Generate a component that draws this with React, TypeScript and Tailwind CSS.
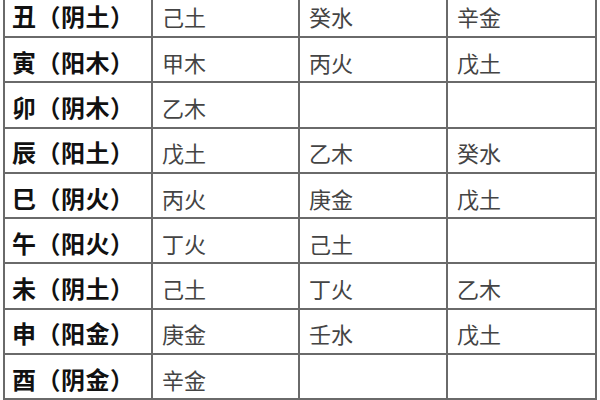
const rows: [string, string, string, string][] = [
  ["丑（阴土）", "己土", "癸水", "辛金"],
  ["寅（阳木）", "甲木", "丙火", "戊土"],
  ["卯（阴木）", "乙木", "", ""],
  ["辰（阳土）", "戊土", "乙木", "癸水"],
  ["巳（阴火）", "丙火", "庚金", "戊土"],
  ["午（阳火）", "丁火", "己土", ""],
  ["未（阴土）", "己土", "丁火", "乙木"],
  ["申（阳金）", "庚金", "壬水", "戊土"],
  ["酉（阴金）", "辛金", "", ""],
];

const font = { fontFamily: '"Noto Sans CJK SC", "Noto Sans", sans-serif' };

export default function App() {
  return (
    <div className="w-[600px] h-[400px] overflow-hidden bg-white" style={font}>
      <div className="ml-[3px] mt-[-9.3px] w-[594px] grid grid-cols-[146px_145px_146px_147px] auto-rows-[43.3px] gap-[2px] p-[2px] bg-[#6a6a6a]">
        {rows.map((r, i) =>
          r.map((c, j) => (
            <div
              key={`${i}-${j}`}
              className={
                j === 0
                  ? "bg-white flex items-center pl-[7px] pt-[4px] text-[24px] font-bold text-[#111] leading-none tracking-[0.5px]"
                  : "bg-white flex items-center pl-[9px] pt-[4px] text-[22px] text-[#444] leading-none"
              }
            >
              {c}
            </div>
          ))
        )}
      </div>
    </div>
  );
}
